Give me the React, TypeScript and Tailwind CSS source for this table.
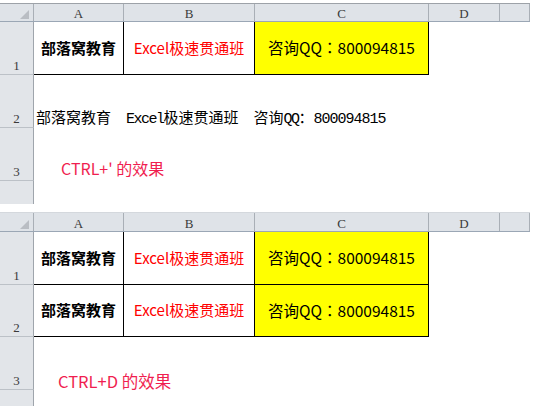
import React from "react";

function HeaderRow({ top }: { top: boolean }) {
  const cols: [string, string][] = [
    ["A", "w-[90px]"],
    ["B", "w-[131px]"],
    ["C", "w-[174px]"],
    ["D", "w-[71px]"],
    ["", "w-[30px]"],
  ];
  return (
    <div
      className={
        "flex " +
        (top ? "h-[19px] border-t border-[#9da2a8]" : "h-[20px] border-t border-[#d4d8dd]") +
        " border-b border-b-[#9ba7b5] box-border w-[530px] bg-[#dfe3e8]"
      }
    >
      <div className="w-[34px] shrink-0 border-r border-[#a9afb6] flex items-end justify-end pr-[3px] pb-[1px]">
        <svg width="11" height="10" viewBox="0 0 11 10">
          <polygon points="1,9 10,9 10,0" fill="#b9bdc3" />
        </svg>
      </div>
      {cols.map(([l, w], i) => (
        <div
          key={i}
          className={
            w +
            " shrink-0 border-r border-[#a9afb6] flex items-center justify-center pt-[2px] text-[13px] leading-none text-[#3a3a3a] font-['Liberation_Serif',serif]"
          }
        >
          {l}
        </div>
      ))}
    </div>
  );
}

function RowHead({ n, last }: { n?: string; last?: boolean }) {
  return (
    <div
      className={
        "w-[34px] h-full shrink-0 bg-[#e2e5e9] border-r border-[#9fa5ac] flex items-end justify-center pb-[2px] text-[13px] leading-none text-[#3a3a3a] font-['Liberation_Serif',serif] " +
        (last ? "" : "border-b border-b-[#bcc1c7]")
      }
    >
      {n}
    </div>
  );
}

function DataRow({ n, h }: { n: string; h: string }) {
  return (
    <div className={"flex " + h}>
      <RowHead n={n} />
      <div className="w-[90px] shrink-0 border-r border-b border-black flex items-center justify-center text-[15px] font-bold text-black font-['Noto_Sans_CJK_SC',sans-serif]">
        部落窝教育
      </div>
      <div className="w-[131px] shrink-0 border-r border-b border-black flex items-center justify-center text-[15px] text-[#ff0000] font-['Noto_Sans_CJK_SC',sans-serif]">
        Excel极速贯通班
      </div>
      <div className="w-[174px] shrink-0 border-r border-b border-black bg-[#ffff00] flex items-center justify-center text-[15.5px] text-black font-['Noto_Sans_CJK_SC',sans-serif]">
        <span>咨询QQ</span>
        <span className="font-['Noto_Sans_CJK_TC',sans-serif]">：</span>
        <span>800094815</span>
      </div>
    </div>
  );
}

export default function App() {
  const latin = "font-['Liberation_Mono',monospace] tracking-[-1.5px]";
  return (
    <div className="w-[544px] h-[413px] bg-white overflow-hidden">
      {/* Top section */}
      <div className="pt-[3px]">
        <HeaderRow top />
        <DataRow n="1" h="h-[53px]" />
        <div className="flex h-[53px]">
          <RowHead n="2" />
          <div className="flex items-end pl-[2px] pb-[1px]">
            <div className="text-[15px] leading-[15px] text-black whitespace-pre font-['Noto_Sans_CJK_SC',sans-serif]">
              <span>部落窝教育</span>
              <span className={latin}>  Excel</span>
              <span>极速贯通班</span>
              <span className={latin}>  </span>
              <span>咨询</span>
              <span className={latin}>QQ</span>
              <span>：</span>
              <span className="font-['Liberation_Mono',monospace] tracking-[-1px]">800094815</span>
            </div>
          </div>
        </div>
        <div className="flex h-[53px]">
          <RowHead n="3" />
          <div className="flex items-end pl-[27px] pb-[5px] text-[16px] leading-[16px] text-[#f01e50] whitespace-pre font-['Noto_Sans_CJK_SC',sans-serif]">
            CTRL+' 的效果
          </div>
        </div>
        <div className="flex h-[23px]">
          <RowHead last />
        </div>
      </div>

      {/* Bottom section */}
      <div className="pt-[8px]">
        <HeaderRow top={false} />
        <DataRow n="1" h="h-[53px]" />
        <DataRow n="2" h="h-[52px]" />
        <div className="flex h-[53px]">
          <RowHead n="3" />
          <div className="flex items-end pl-[24px] pb-[1px] text-[16.5px] leading-[16px] text-[#f01e50] whitespace-pre font-['Noto_Sans_CJK_SC',sans-serif]">
            CTRL+D 的效果
          </div>
        </div>
        <div className="flex h-[16px]">
          <RowHead last />
        </div>
      </div>
    </div>
  );
}
